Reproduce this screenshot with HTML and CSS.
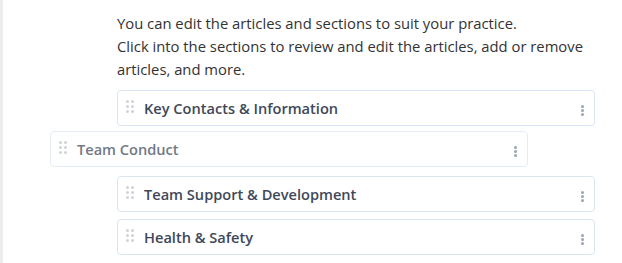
FILE: index.html
```html
<!DOCTYPE html>
<html lang="en">
<head>
  <meta charset="UTF-8" />
  <meta name="viewport" content="width=device-width, initial-scale=1" />
  <title>Sections</title>
  <link rel="stylesheet" href="styles.css">
</head>
<body>
  <div class="page">
    <p class="intro">
      You can edit the articles and sections to suit your practice.<br>
      Click into the sections to review and edit the articles, add or remove articles, and more.
    </p>

    <!-- Section list -->
    <ul class="sections">
      <li class="section">
        <span class="grip"><i></i><i></i><i></i><i></i><i></i><i></i></span>
        <span class="title">Key Contacts &amp; Information</span>
        <span class="kebab"><i></i><i></i><i></i></span>
      </li>
      <li class="section dragging">
        <span class="grip"><i></i><i></i><i></i><i></i><i></i><i></i></span>
        <span class="title">Team Conduct</span>
        <span class="kebab"><i></i><i></i><i></i></span>
      </li>
      <li class="section">
        <span class="grip"><i></i><i></i><i></i><i></i><i></i><i></i></span>
        <span class="title">Team Support &amp; Development</span>
        <span class="kebab"><i></i><i></i><i></i></span>
      </li>
      <li class="section">
        <span class="grip"><i></i><i></i><i></i><i></i><i></i><i></i></span>
        <span class="title">Health &amp; Safety</span>
        <span class="kebab"><i></i><i></i><i></i></span>
      </li>
    </ul>
  </div>
</body>
</html>
```

FILE: styles.css
```css
body {
  margin: 0;
  font-family: 'Open Sans', sans-serif;
  background: #fff;
  color: #333;
}

.page {
  border-left: 3px solid #ededed;
  min-height: 263px;
  box-sizing: border-box;
  padding: 12px 0 0 114px;
}

.intro {
  width: 478px;
  margin: 0;
  font-size: 14.8px;
  line-height: 23px;
  color: #333;
}

.sections {
  list-style: none;
  margin: 9px 0 0;
  padding: 0;
  width: 478px;
  display: flex;
  flex-direction: column;
  gap: 7px;
}

.section {
  height: 36px;
  box-sizing: border-box;
  border: 1px solid #dbe5f1;
  border-radius: 4px;
  background: #fff;
  display: flex;
  align-items: center;
  padding: 0 10px 0 8px;
}

.section.dragging {
  transform: translate(-67px, -2px);
  border-color: #e6ecf5;
}

.grip {
  display: grid;
  grid-template-columns: 3px 3px;
  gap: 2px;
  width: 8px;
  align-self: flex-start;
  margin-top: 9px;
}

.grip i {
  width: 3px;
  height: 3px;
  border-radius: 50%;
  background: #cfd3da;
}

.title {
  flex: 1;
  margin-left: 10px;
  font-size: 14.6px;
  font-weight: 600;
  color: #3e4859;
}

.dragging .title {
  color: #727985;
}

.kebab {
  display: flex;
  flex-direction: column;
  gap: 1px;
  margin-top: 5px;
}

.kebab i {
  width: 3px;
  height: 3px;
  border-radius: 50%;
  background: #9aa3b8;
}
```
